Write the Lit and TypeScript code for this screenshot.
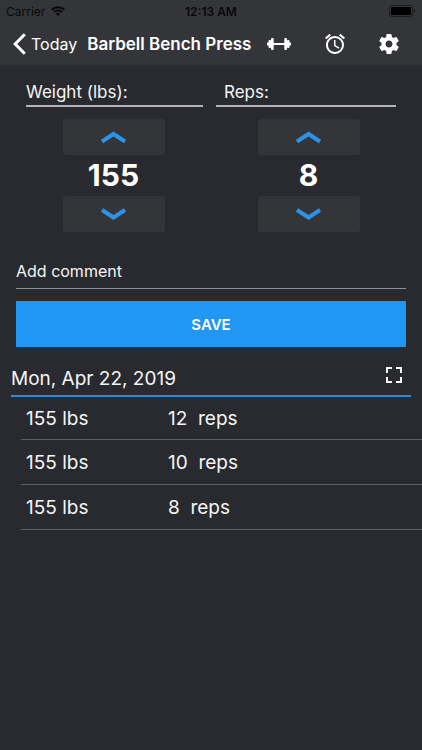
import { LitElement, html, css, svg } from "lit";
import { customElement, property, state } from "lit/decorators.js";

interface WorkoutSet {
  weight: number;
  reps: number;
}

const chevronUp = svg`<path d="M1 11.5 12.5 4 24 11.5" />`;
const chevronDown = svg`<path d="M1 3 12.5 10.5 24 3" />`;

@customElement("number-stepper")
export class NumberStepper extends LitElement {
  @property() label = "";
  @property({ type: Number }) value = 0;
  @property({ type: Number }) step = 1;

  static styles = css`
    :host {
      display: flex;
      flex-direction: column;
      align-items: center;
    }
    .label {
      align-self: stretch;
      box-sizing: border-box;
      height: 28px;
      margin: 0 var(--label-end, 8px) 12px var(--label-start, 10px);
      padding-left: var(--label-indent, 0);
      border-bottom: 2px solid #b4b4b6;
      font-size: 17px;
      line-height: 26px;
    }
    .step {
      display: grid;
      place-items: center;
      width: 102px;
      height: 36px;
      padding: 0;
      border: 0;
      border-radius: 3px;
      background: #343539;
      cursor: pointer;
    }
    .step svg {
      width: 25px;
      height: 14px;
      fill: none;
      stroke: #2c94e8;
      stroke-width: 4;
    }
    .value {
      width: 102px;
      height: 41px;
      padding: 0;
      border: 0;
      background: none;
      color: #fff;
      font: 700 30px/41px Inter, "Liberation Sans", sans-serif;
      text-align: center;
      outline: none;
    }
  `;

  private change(by: number) {
    this.value = Math.max(0, this.value + by);
  }

  render() {
    return html`
      <label class="label" for="value">${this.label}</label>
      <button class="step" aria-label="Increase" @click=${() => this.change(this.step)}>
        <svg viewBox="0 0 25 14">${chevronUp}</svg>
      </button>
      <input class="value" id="value" inputmode="decimal" .value=${String(this.value)}
        @change=${(e: Event) => (this.value = Number((e.target as HTMLInputElement).value) || 0)} />
      <button class="step" aria-label="Decrease" @click=${() => this.change(-this.step)}>
        <svg viewBox="0 0 25 14">${chevronDown}</svg>
      </button>
    `;
  }
}

@customElement("app-root")
export class AppRoot extends LitElement {
  @state() private sets: WorkoutSet[] = [
    { weight: 155, reps: 12 },
    { weight: 155, reps: 10 },
    { weight: 155, reps: 8 },
  ];

  static styles = css`
    :host {
      display: block;
      min-height: 100vh;
      background: #292a2f;
      color: #f5f5f6;
      font-family: Inter, "Liberation Sans", sans-serif;
    }
    button {
      padding: 0;
      border: 0;
      background: none;
      color: inherit;
      font-family: inherit;
      cursor: pointer;
    }
    svg {
      display: block;
    }
    .top {
      background: #343539;
    }
    .status {
      display: grid;
      grid-template-columns: 1fr auto 1fr;
      align-items: center;
      height: 22px;
      padding: 0 6px;
      color: #08080a;
      font-size: 12px;
    }
    .carrier {
      display: flex;
      align-items: center;
      gap: 6px;
    }
    .time {
      font-weight: 600;
    }
    .battery {
      justify-self: end;
    }
    .nav {
      display: flex;
      align-items: center;
      height: 43px;
      padding: 0 22px 0 13px;
    }
    .back {
      display: flex;
      align-items: center;
      gap: 5px;
      color: #fff;
      font-size: 16px;
      text-decoration: none;
    }
    .title {
      margin: 0 0 0 10px;
      color: #fff;
      font-size: 17px;
      font-weight: 600;
      white-space: nowrap;
    }
    .actions {
      display: flex;
      flex: 1;
      align-items: center;
      justify-content: space-between;
      padding-left: 16px;
      color: #fff;
    }
    .entry {
      padding: 14px 16px 0;
    }
    .steppers {
      display: grid;
      grid-template-columns: 1fr 1fr;
    }
    .reps {
      --label-start: 5px;
      --label-end: 10px;
      --label-indent: 8px;
    }
    .comment {
      display: block;
      box-sizing: border-box;
      width: 100%;
      height: 36px;
      margin-top: 21px;
      padding: 0;
      border: 0;
      border-bottom: 1px solid #8f9093;
      border-radius: 0;
      background: none;
      color: inherit;
      font: 400 16px Inter, "Liberation Sans", sans-serif;
      outline: none;
    }
    .comment::placeholder {
      color: #f5f5f6;
      opacity: 1;
    }
    .save {
      display: block;
      width: 100%;
      height: 46px;
      margin-top: 12px;
      background: #2196f3;
      color: #fff;
      font-size: 15px;
      font-weight: 600;
    }
    .day {
      display: flex;
      align-items: center;
      justify-content: space-between;
      box-sizing: border-box;
      height: 36px;
      margin: 14px 11px 0;
      padding-right: 9px;
      border-bottom: 2px solid #2c8ad6;
    }
    .date {
      margin: 0;
      font-size: 19px;
      font-weight: 400;
    }
    .expand {
      padding-bottom: 6px;
    }
    .log {
      padding-left: 21px;
    }
    .sets {
      width: 100%;
      border-spacing: 0;
      table-layout: fixed;
      font-size: 19px;
    }
    .sets td {
      box-sizing: border-box;
      height: 45px;
      padding: 0;
      border-bottom: 1px solid #5f6064;
      white-space: pre;
    }
    .sets .lifted {
      width: 147px;
      padding-left: 5px;
    }
    .sets tr:first-child td {
      height: 43px;
    }
  `;

  private save() {
    const [weight, reps] = [...this.renderRoot.querySelectorAll<NumberStepper>("number-stepper")].map(
      (s) => s.value,
    );
    this.sets = [...this.sets, { weight, reps }];
  }

  render() {
    return html`
      <header class="top">
        <div class="status">
          <span class="carrier">
            Carrier
            <svg width="14" height="10" viewBox="0 0 14 10" fill="none" stroke="currentColor" stroke-width="2">
              <path d="M0.7 3.8a9 9 0 0 1 12.6 0M3 6.1a5.7 5.7 0 0 1 8 0" />
              <path d="M7 10 4.8 7.7a3.2 3.2 0 0 1 4.4 0z" fill="currentColor" stroke="none" />
            </svg>
          </span>
          <span class="time">12:13 AM</span>
          <svg class="battery" width="27" height="12" viewBox="0 0 27 12">
            <rect x="0.5" y="0.5" width="23" height="11" rx="2.5" fill="none" stroke="#1c1c1f" />
            <rect x="2" y="2" width="20" height="8" rx="1" fill="#000" />
            <path d="M25 4v4a2 2 0 0 0 1.300-2 2 2 0 0 0-1.300-2z" fill="#1c1c1f" />
          </svg>
        </div>
        <nav class="nav">
          <a class="back" href="#today">
            <svg width="13" height="22" viewBox="0 0 13 22" fill="none" stroke="currentColor" stroke-width="3">
              <path d="M11.800 1.300 2.200 11l9.600 9.700" />
            </svg>
            Today
          </a>
          <h1 class="title">Barbell Bench Press</h1>
          <div class="actions">
            <button aria-label="Exercise">
              <svg width="24" height="14" viewBox="0 0 24 14" fill="currentColor">
                <rect x="0" y="5.500" width="2" height="3" rx="0.500" />
                <rect x="1.500" y="3" width="2.500" height="8" rx="1" />
                <rect x="4" y="1" width="2.700" height="12" rx="1" />
                <rect x="6" y="6" width="12" height="2" />
                <rect x="17.300" y="1" width="2.700" height="12" rx="1" />
                <rect x="20" y="3" width="2.500" height="8" rx="1" />
                <rect x="22" y="5.500" width="2" height="3" rx="0.500" />
              </svg>
            </button>
            <button aria-label="Rest timer">
              <svg width="22" height="22" viewBox="1 1 22 22" fill="currentColor">
                <path d="M22 5.720l-4.600-3.860-1.290 1.530 4.600 3.860L22 5.720zM7.880 3.390L6.600 1.860 2 5.710l1.290 1.530 4.590-3.850zM12.500 8H11v6l4.750 2.850.750-1.230-4-2.370V8zM12 4c-4.970 0-9 4.030-9 9s4.020 9 9 9a9 9 0 0 0 0-18zm0 16c-3.870 0-7-3.130-7-7s3.130-7 7-7 7 3.130 7 7-3.130 7-7 7z" />
              </svg>
            </button>
            <button aria-label="Settings">
              <svg width="22" height="22" viewBox="1 1 22 22" fill="currentColor">
                <path d="M19.430 12.980c.040-.320.070-.640.070-.980s-.030-.660-.070-.980l2.110-1.650c.190-.150.240-.420.120-.640l-2-3.460c-.120-.220-.390-.300-.610-.220l-2.490 1c-.520-.400-1.080-.730-1.690-.980l-.380-2.650A.488.488 0 0 0 14 2h-4c-.250 0-.460.180-.490.420l-.380 2.650c-.610.250-1.170.590-1.690.980l-2.490-1c-.230-.090-.490 0-.610.220l-2 3.460c-.130.220-.070.490.120.640l2.110 1.650c-.040.320-.070.650-.070.980s.030.660.070.980l-2.110 1.650c-.190.150-.240.420-.120.640l2 3.460c.120.220.390.300.610.220l2.490-1c.520.400 1.080.730 1.690.980l.380 2.650c.030.240.240.420.490.420h4c.250 0 .460-.180.490-.420l.380-2.650c.610-.250 1.170-.590 1.690-.980l2.490 1c.230.090.490 0 .610-.220l2-3.460c.120-.220.070-.490-.120-.640l-2.110-1.650zM12 15.500c-1.930 0-3.500-1.570-3.500-3.500s1.570-3.500 3.500-3.500 3.500 1.570 3.500 3.500-1.570 3.500-3.500 3.500z" />
              </svg>
            </button>
          </div>
        </nav>
      </header>
      <main>
        <section class="entry">
          <div class="steppers">
            <number-stepper label="Weight (lbs):" .value=${155} .step=${5}></number-stepper>
            <number-stepper class="reps" label="Reps:" .value=${8}></number-stepper>
          </div>
          <input class="comment" aria-label="Add comment" placeholder="Add comment" />
          <button class="save" @click=${this.save}>SAVE</button>
        </section>
        <section>
          <div class="day">
            <h2 class="date">Mon, Apr 22, 2019</h2>
            <button class="expand" aria-label="Expand">
              <svg width="16" height="16" viewBox="0 0 16 16" fill="none" stroke="currentColor" stroke-width="2">
                <path d="M1 6V1h5M10 1h5v5M15 10v5h-5M6 15H1v-5" />
              </svg>
            </button>
          </div>
          <div class="log">
            <table class="sets">
              <tbody>
                ${this.sets.map(
                  (s) => html`<tr><td class="lifted">${s.weight} lbs</td><td>${s.reps}  reps</td></tr>`,
                )}
              </tbody>
            </table>
          </div>
        </section>
      </main>
    `;
  }
}
